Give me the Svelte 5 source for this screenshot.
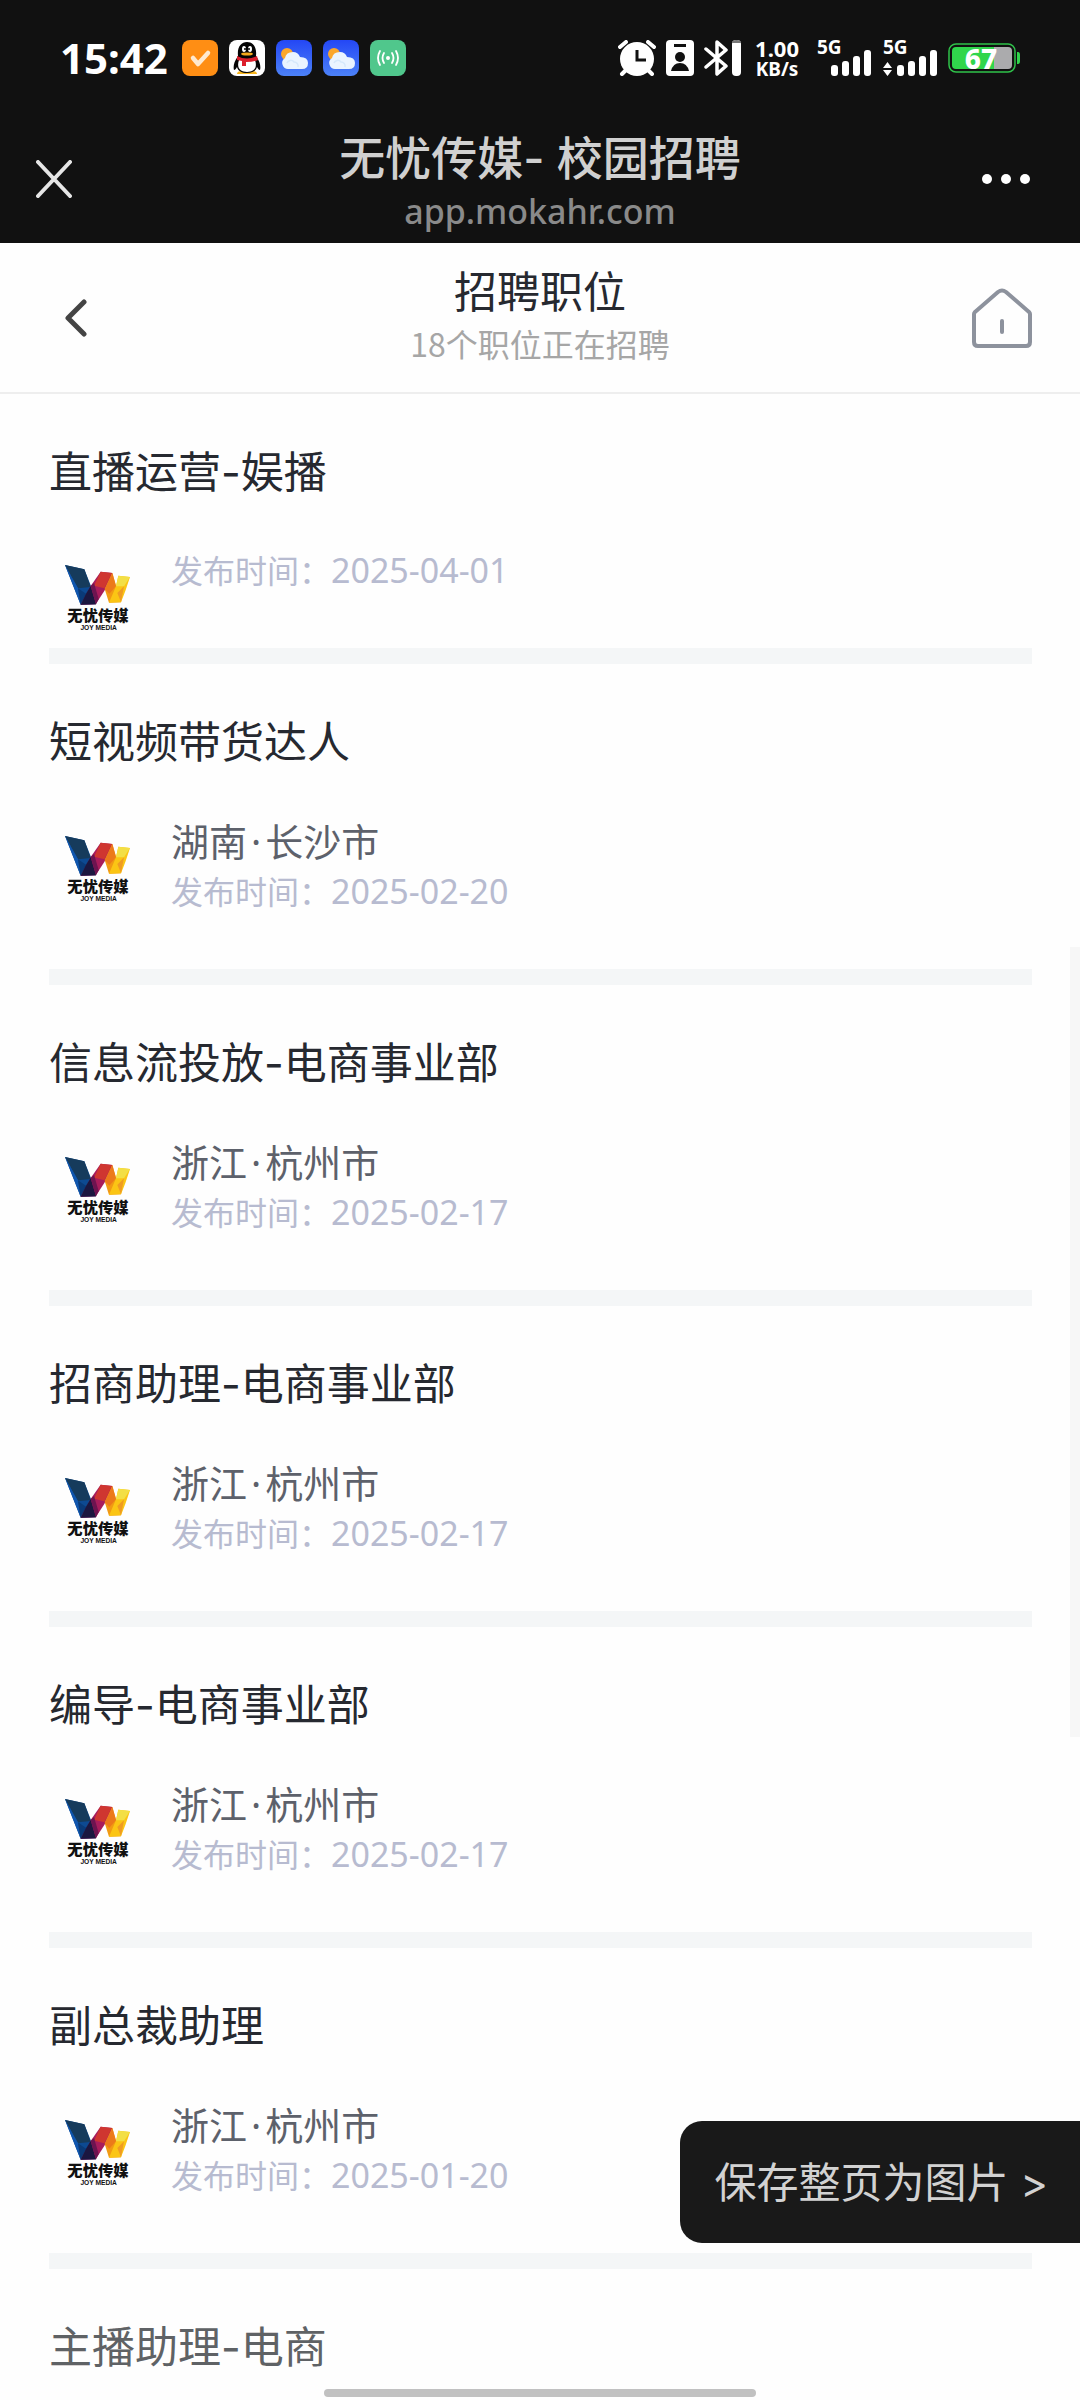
<script>
  const jobs = [
    { title: '直播运营-娱播', date: '2025-04-01' },
    { title: '短视频带货达人', province: '湖南', city: '长沙市', date: '2025-02-20' },
    { title: '信息流投放-电商事业部', province: '浙江', city: '杭州市', date: '2025-02-17' },
    { title: '招商助理-电商事业部', province: '浙江', city: '杭州市', date: '2025-02-17' },
    { title: '编导-电商事业部', province: '浙江', city: '杭州市', date: '2025-02-17' },
    { title: '副总裁助理', province: '浙江', city: '杭州市', date: '2025-01-20' },
    { title: '主播助理-电商' },
  ];
</script>

{#snippet weather()}
  <svg class="app-icon" viewBox="0 0 36 36" aria-hidden="true">
    <defs>
      <linearGradient id="sky" x1="0" y1="0" x2="0" y2="1">
        <stop offset="0" stop-color="#2447f5" />
        <stop offset="1" stop-color="#4c82f8" />
      </linearGradient>
    </defs>
    <rect width="36" height="36" rx="8" fill="url(#sky)" />
    <circle cx="11" cy="14" r="6" fill="#fba72c" />
    <path d="M13 29a6 6 0 0 1-4-11q1-6 8-6 5 0 7 5 8 0 8 6 0 6-6 6z" fill="#eaf4ff" />
    <path d="M11 23a4 4 0 0 1 7-1 4 4 0 0 1 4 5" fill="none" stroke="#d5e8fb" stroke-width="1.500" />
  </svg>
{/snippet}

{#snippet bars()}
  <rect x="0" y="15" width="7" height="11" rx="3" />
  <rect x="11" y="11" width="7" height="15" rx="3" />
  <rect x="22" y="6" width="7" height="20" rx="3" />
  <rect x="33" y="0" width="7" height="26" rx="3" />
{/snippet}

{#snippet logo()}
  <svg class="logo" viewBox="-3 -6 288 288" role="img" aria-label="无忧传媒">
    <path d="M45 42 103 55 124 108 138 160 92 161z" fill="#0d4a92" />
    <path d="M45 42 103 55 122 108 84 112z" fill="#163b5c" />
    <path d="M45 42 84 112 92 161z" fill="#1056ae" />
    <path d="M84 112 108 128 92 161z" fill="#0a3a78" />
    <path d="M152 62 187 66 172 106 137 160 92 161 122 105z" fill="#a81c5c" />
    <path d="M152 62 187 66 163 112 132 104z" fill="#cf3630" />
    <path d="M122 105 138 160 92 161 108 128z" fill="#1b1740" />
    <path d="M122 105 132 96 146 144 138 160z" fill="#6d1450" />
    <path d="M187 66 213 154 177 155 164 114z" fill="#f19a13" />
    <path d="M187 66 198 106 178 128 164 114z" fill="#ec7a1a" />
    <path d="M205 74 240 78 226 120 213 154 177 155 198 106z" fill="#fbc514" />
    <path d="M205 74 240 78 222 106 198 106z" fill="#f3df45" />
    <path d="M222 106 213 154 202 126z" fill="#ef9c22" />
    <text x="144" y="211" class="logo-name">无忧传媒</text>
    <text x="146" y="236" class="logo-latin">JOY MEDIA</text>
  </svg>
{/snippet}

<div class="page">
  <div class="top">
    <div class="status">
      <span class="clock">15:42</span>
      <div class="apps">
        <svg class="app-icon" viewBox="0 0 36 36" aria-hidden="true">
          <rect width="36" height="36" rx="8" fill="#ff8e14" />
          <path d="m11 18 5 6 10-11" fill="none" stroke="#ffe9cf" stroke-width="4.500" stroke-linecap="round" stroke-linejoin="round" />
        </svg>
        <svg class="app-icon" viewBox="0 0 36 36" aria-hidden="true">
          <rect width="36" height="36" rx="8" fill="#fff" />
          <path d="M8 34q0-3 5-3h10q5 0 5 3z" fill="#f7b51c" />
          <path d="M9 16C8 7 12 2 18 2s10 5 9 14c4 6 5 10 4 14-1 0-2-1-3-3-1 4-5 6-10 6s-9-2-10-6c-1 2-2 3-3 3-1-4 0-8 4-14z" fill="#050505" />
          <path d="M10 20h16c3 9-2 12-8 12s-11-3-8-12z" fill="#fff" />
          <path d="M8 16q10 5 20 0l1 4q-5 2-12 2v4h-4v-5l-5-1z" fill="#dc1f2c" />
          <ellipse cx="15" cy="9" rx="2" ry="3" fill="#fff" />
          <ellipse cx="21" cy="9" rx="2" ry="3" fill="#fff" />
          <circle cx="16" cy="9" r="1" />
          <circle cx="20" cy="9" r="1" />
          <ellipse cx="18" cy="14" rx="6" ry="1.600" fill="#f5a91b" />
        </svg>
        {@render weather()}
        {@render weather()}
        <svg class="app-icon" viewBox="0 0 36 36" aria-hidden="true">
          <rect width="36" height="36" rx="8" fill="#50c78c" />
          <circle cx="18" cy="18" r="2" fill="#fff" />
          <path d="M14 13q-3 5 0 10M22 13q3 5 0 10M10 11q-4 7 0 14M26 11q4 7 0 14" fill="none" stroke="#fff" stroke-width="1.800" stroke-linecap="round" />
        </svg>
      </div>

      <div class="system">
        <svg width="38" height="36" viewBox="0 0 38 36" aria-hidden="true">
          <circle cx="19" cy="19" r="17" fill="#fff" />
          <path d="m2 7 6-5M36 7l-6-5M8 30l-4 4M30 30l4 4" stroke="#fff" stroke-width="4" stroke-linecap="round" />
          <path d="M19 10v10h9" fill="none" stroke="#111" stroke-width="3" />
        </svg>
        <svg width="28" height="36" viewBox="0 0 28 36" aria-hidden="true">
          <rect width="28" height="36" rx="4" fill="#fff" />
          <rect x="8" y="4" width="12" height="3" fill="#111" />
          <circle cx="14" cy="17" r="5" fill="#111" />
          <path d="M5 31q2-8 9-8t9 8z" fill="#111" />
        </svg>
        <svg width="37" height="36" viewBox="0 0 37 36" aria-hidden="true">
          <path d="m2 9 20 17-9 8V2l9 8L2 27" fill="none" stroke="#fff" stroke-width="3.500" stroke-linejoin="round" stroke-linecap="round" />
          <rect x="28" y="0" width="9" height="36" rx="4" fill="#fff" />
          <path d="M28 3q0-3 4-3h1q4 0 4 3z" fill="#777" />
        </svg>
        <div class="speed">
          <span class="speed-value">1.00</span>
          <span class="speed-unit">KB/s</span>
        </div>
        <div class="signal first">
          <span class="network">5G</span>
          <svg class="bars" width="40" height="26" viewBox="0 0 40 26" fill="#fff" aria-hidden="true">{@render bars()}</svg>
        </div>
        <div class="signal">
          <span class="network">5G</span>
          <svg class="arrows" width="9" height="14" viewBox="0 0 9 14" fill="#fff" aria-hidden="true"><path d="M0 6 4.500 0 9 6zM0 8h9l-4.500 6z" /></svg>
          <svg class="bars" width="40" height="26" viewBox="0 0 40 26" fill="#fff" aria-hidden="true">{@render bars()}</svg>
        </div>
        <div class="battery">
          <svg width="72" height="30" viewBox="0 0 72 30" aria-hidden="true">
            <rect x="1" y="1" width="66" height="28" rx="7" fill="#111" stroke="#2fc24a" stroke-width="1.500" />
            <path d="M8 4h38v22H8q-4 0-4-4V8q0-4 4-4z" fill="#30d64c" />
            <path d="M46 4h14q4 0 4 4v14q0 4-4 4H46z" fill="#ababad" />
            <path d="M69 9h1q2 0 2 3v6q0 3-2 3h-1z" fill="#30d64c" />
          </svg>
          <span class="percent">67</span>
        </div>
      </div>
    </div>

    <div class="browser">
      <button class="icon-btn" aria-label="关闭">
        <svg width="36" height="38" viewBox="0 0 36 38" fill="none" stroke="#e6e6e6" stroke-width="4" stroke-linecap="round"><path d="m2 2 32 34M34 2 2 36" /></svg>
      </button>
      <div class="browser-title">
        <span class="site">无忧传媒- 校园招聘</span>
        <span class="host">app.mokahr.com</span>
      </div>
      <button class="icon-btn more" aria-label="更多">
        <svg width="48" height="10" viewBox="0 0 48 10" fill="#fff"><circle cx="5" cy="5" r="5" /><circle cx="24" cy="5" r="5" /><circle cx="43" cy="5" r="5" /></svg>
      </button>
    </div>
  </div>

  <header class="header">
    <button class="icon-btn" aria-label="返回">
      <svg width="22" height="38" viewBox="0 0 22 38" fill="none" stroke="#444" stroke-width="5" stroke-linecap="round" stroke-linejoin="round"><path d="M19 3 3 19l16 16" /></svg>
    </button>
    <div class="header-title">
      <h1>招聘职位</h1>
      <p>18个职位正在招聘</p>
    </div>
    <a class="home" href="/" aria-label="首页">
      <svg width="60" height="60" viewBox="0 0 60 60" fill="none" stroke="#8d929d" stroke-width="4" stroke-linecap="round" stroke-linejoin="round">
        <path d="M2 26q0-1 1-2L26 4q4-3 8 0l23 20q1 1 1 2v28q0 4-4 4H6q-4 0-4-4z" />
        <path d="M30 33v11" />
      </svg>
    </a>
  </header>

  <main class="jobs">
    {#each jobs as job}
      <article class="job" class:compact={!job.city} class:dim={!job.date}>
        <h2>{job.title}</h2>
        {#if job.date}
          <div class="job-body">
            {@render logo()}
            <div class="job-info">
              {#if job.city}
                <p class="place">{job.province}<span class="dot">·</span>{job.city}</p>
              {/if}
              <p class="date">发布时间：<time datetime={job.date}>{job.date}</time></p>
            </div>
          </div>
        {/if}
      </article>
    {/each}
  </main>

  <div class="scroll-thumb"></div>
  <button class="save">保存整页为图片 &gt;</button>
  <div class="home-bar"></div>
</div>

<style>
  :global(body) { background: #fefefe; }
  .page { position: relative; min-height: 100vh; font-family: "Noto Sans CJK SC", "Noto Sans", sans-serif; color: #262930; }
  h1, h2, p { margin: 0; font-weight: 400; }
  svg { display: block; flex-shrink: 0; }
  button { border: none; background: none; padding: 0; font: inherit; color: inherit; cursor: pointer; }

  .top { background: #111; color: #fff; }
  .status { display: flex; align-items: center; height: 116px; padding: 0 60px; font-family: "Noto Sans", sans-serif; font-weight: 700; }
  .clock { font-size: 42px; line-height: 48px; }
  .apps { display: flex; gap: 11px; margin-left: 14px; }
  .app-icon { width: 36px; height: 36px; }
  .system { display: flex; align-items: center; gap: 10px; margin-left: auto; }
  .speed { display: flex; flex-direction: column; align-items: center; margin-left: 4px; }
  .speed-value { font-size: 22px; line-height: 22px; }
  .speed-unit { font-size: 19px; line-height: 20px; }
  .signal { position: relative; display: flex; align-items: flex-end; height: 36px; margin-left: 2px; padding-left: 14px; }
  .signal.first { margin-left: 8px; }
  .signal .arrows { position: absolute; left: 0; bottom: 0; }
  .network { position: absolute; left: 0; top: -2px; font-size: 19px; line-height: 18px; }
  .battery { position: relative; margin-left: 1px; }
  .percent { position: absolute; inset: 0 6px 0 0; font-size: 28px; line-height: 30px; font-weight: 800; text-align: center; }

  .browser { display: grid; grid-template-columns: 1fr auto 1fr; align-items: center; height: 125px; padding: 0 50px 2px 34px; }
  .icon-btn { display: flex; align-items: center; justify-content: center; justify-self: start; min-width: 40px; min-height: 48px; }
  .browser-title { display: flex; flex-direction: column; align-items: center; gap: 3px; margin-left: 16px; padding-top: 5px; }
  .site { font-family: "Inter", "Noto Sans CJK SC", sans-serif; font-size: 46px; line-height: 56px; font-weight: 500; color: #d0d0d0; }
  .host { font-family: "Noto Sans", sans-serif; font-size: 34px; line-height: 44px; font-weight: 500; color: #8a8a8a; }
  .more { justify-self: end; }

  .header { display: grid; grid-template-columns: 1fr auto 1fr; align-items: center; height: 149px; padding: 0 48px 0 56px; border-bottom: 2px solid #eee; }
  .header-title { display: flex; flex-direction: column; align-items: center; margin-right: 8px; padding-bottom: 6px; }
  .header h1 { font-size: 43px; line-height: 56px; }
  .header p { font-size: 32px; line-height: 52px; color: #a6a6a6; }
  .home { justify-self: end; }

  .job { margin: 0 48px 0 49px; padding: 48px 0 53px; border-bottom: 16px solid #f4f6f7; }
  .job h2 { font-family: "Inter", "Noto Sans CJK SC", sans-serif; font-size: 43px; line-height: 60px; }
  .job.compact { padding-bottom: 3px; }
  .job.dim { color: #5f6265; border-bottom: none; }
  .job-body { display: flex; gap: 26px; margin-top: 43px; }
  .compact .job-body { margin-top: 42px; }
  .logo { width: 96px; height: 96px; margin-top: 5px; }
  .logo-name { font-size: 46px; font-weight: 900; text-anchor: middle; fill: #111; }
  .logo-latin { font-family: "Liberation Sans", sans-serif; font-size: 20px; font-weight: 700; text-anchor: middle; fill: #111; }
  .place { font-size: 38px; line-height: 50px; color: #5d616b; }
  .dot { margin: 0 4px; font-family: "Noto Sans", sans-serif; line-height: 32px; }
  .date { font-size: 32px; line-height: 50px; color: #b7bbd0; }
  .date time { font-family: "Noto Sans", sans-serif; font-size: 34px; line-height: 32px; }

  .scroll-thumb { position: fixed; right: 0; top: 947px; width: 10px; height: 790px; background: #f7f7f7; }
  .save { position: fixed; right: 0; bottom: 157px; padding: 32px 32px 30px 34px; border-radius: 22px 0 0 22px; background: #191919; color: #d2d2d2; font-family: "Inter", "Noto Sans CJK SC", sans-serif; font-size: 42px; line-height: 60px; }
  .home-bar { position: fixed; left: 30%; right: 30%; bottom: 3px; height: 8px; border-radius: 4px; background: #c1c1c1; }
</style>
